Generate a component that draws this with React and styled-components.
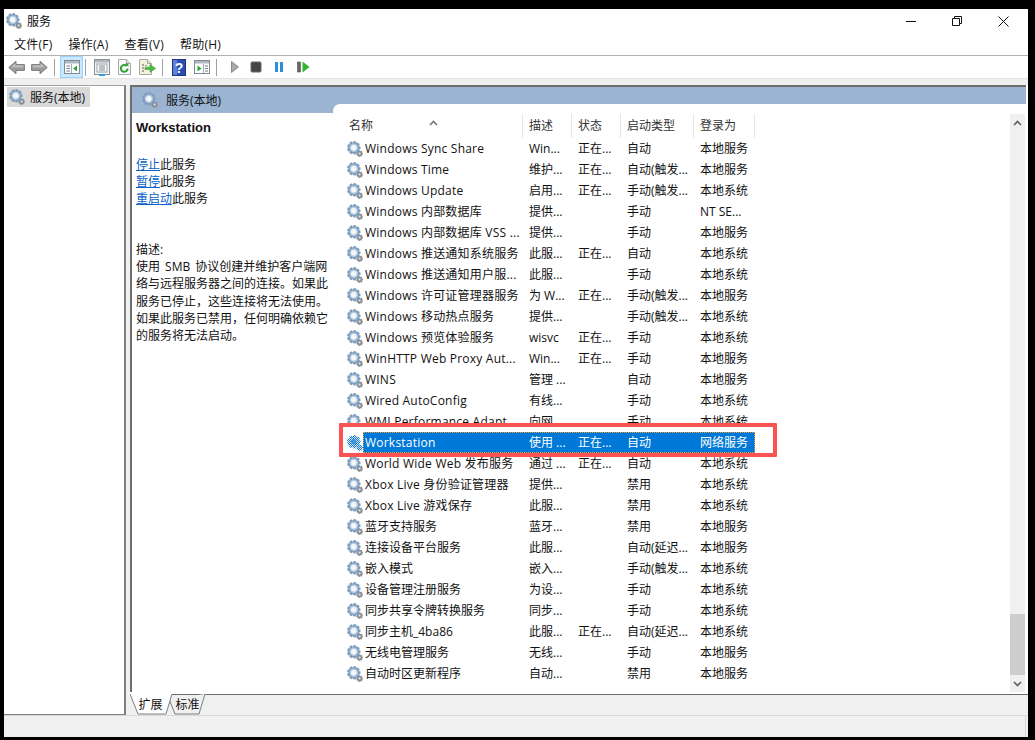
import React from "react";
import styled, { createGlobalStyle } from "styled-components";

const FONT = `"Open Sans", "Noto Sans CJK SC", sans-serif`;

const GlobalStyle = createGlobalStyle`
  html, body {
    margin: 0;
    padding: 0;
    background: #000;
  }
  body {
    font-family: ${FONT};
    font-size: 12px;
    line-height: 17px;
    color: #111;
  }
`;

const services = [
  ["Windows Sync Share", "Win...", "正在...", "自动", "本地服务"],
  ["Windows Time", "维护...", "正在...", "自动(触发...", "本地服务"],
  ["Windows Update", "启用...", "正在...", "手动(触发...", "本地系统"],
  ["Windows 内部数据库", "提供...", "", "手动", "NT SE..."],
  ["Windows 内部数据库 VSS ...", "提供...", "", "手动", "本地服务"],
  ["Windows 推送通知系统服务", "此服...", "正在...", "自动", "本地系统"],
  ["Windows 推送通知用户服...", "此服...", "", "手动", "本地系统"],
  ["Windows 许可证管理器服务", "为 W...", "正在...", "手动(触发...", "本地服务"],
  ["Windows 移动热点服务", "提供...", "", "手动(触发...", "本地系统"],
  ["Windows 预览体验服务", "wisvc", "正在...", "手动", "本地系统"],
  ["WinHTTP Web Proxy Aut...", "Win...", "正在...", "手动", "本地服务"],
  ["WINS", "管理 ...", "", "自动", "本地服务"],
  ["Wired AutoConfig", "有线...", "", "手动", "本地系统"],
  ["WMI Performance Adapt...", "向网...", "", "手动", "本地系统"],
  ["Workstation", "使用 ...", "正在...", "自动", "网络服务"],
  ["World Wide Web 发布服务", "通过 ...", "正在...", "自动", "本地系统"],
  ["Xbox Live 身份验证管理器", "提供...", "", "禁用", "本地系统"],
  ["Xbox Live 游戏保存", "此服...", "", "禁用", "本地系统"],
  ["蓝牙支持服务", "蓝牙...", "", "禁用", "本地服务"],
  ["连接设备平台服务", "此服...", "", "自动(延迟...", "本地服务"],
  ["嵌入模式", "嵌入...", "", "手动(触发...", "本地系统"],
  ["设备管理注册服务", "为设...", "", "手动", "本地系统"],
  ["同步共享令牌转换服务", "同步...", "", "手动", "本地系统"],
  ["同步主机_4ba86", "此服...", "正在...", "自动(延迟...", "本地系统"],
  ["无线电管理服务", "无线...", "", "手动", "本地服务"],
  ["自动时区更新程序", "自动...", "", "禁用", "本地服务"],
];

const columns = ["名称", "描述", "状态", "启动类型", "登录为"];

// toothed outline for the gear icon
const gearPath = (cx, cy, outer, inner, teeth) => {
  const pts = [];
  const step = (Math.PI * 2) / teeth;
  for (let i = 0; i < teeth; i++) {
    const a = i * step;
    [
      [inner, -0.5],
      [outer, -0.28],
      [outer, 0.28],
      [inner, 0.5],
    ].forEach(([r, k]) => {
      const t = a + k * step;
      pts.push(`${(cx + r * Math.cos(t)).toFixed(2)} ${(cy + r * Math.sin(t)).toFixed(2)}`);
    });
  }
  return `M${pts.join("L")}Z`;
};

const BIG_GEAR = gearPath(6.8, 6.8, 6.8, 5.2, 9);
const SMALL_GEAR = gearPath(12.6, 12.6, 3.4, 2.4, 7);

const GearIcon = ({ selected }) => (
  <svg width="16" height="16" viewBox="0 0 16 16">
    {selected && (
      <defs>
        <pattern id="sel-dither" width="2" height="2" patternUnits="userSpaceOnUse">
          <rect width="2" height="2" fill="#0f72cc" />
          <rect width="1" height="1" fill="#d8ebfb" />
          <rect x="1" y="1" width="1" height="1" fill="#d8ebfb" />
        </pattern>
      </defs>
    )}
    <path d={SMALL_GEAR} fill={selected ? "url(#sel-dither)" : "#8b9097"} />
    {!selected && <circle cx="12.6" cy="12.6" r="1" fill="#e6e8ea" />}
    <path d={BIG_GEAR} fill={selected ? "url(#sel-dither)" : "#7e9cbc"} />
    {!selected && <circle cx="6.8" cy="6.8" r="4.2" fill="#b9cde2" />}
    <circle cx="6.8" cy="6.8" r="2.7" fill={selected ? "#3f94de" : "#f4f7fa"} />
  </svg>
);

const BackIcon = () => (
  <svg width="17" height="15" viewBox="0 0 17 15">
    <path d="M.8 7.5 8 1.2v3.4h8.4v5.8H8v3.4z" fill="#9c9c9c" stroke="#7a7a7a" />
    <path d="M3 7.2 7.4 3.6v2h8v1.6z" fill="#c4c4c4" />
  </svg>
);

const ForwardIcon = () => (
  <svg width="17" height="15" viewBox="0 0 17 15">
    <path d="M16.2 7.5 9 1.2v3.4H.6v5.8H9v3.4z" fill="#9c9c9c" stroke="#7a7a7a" />
    <path d="M14 7.2 9.6 3.6v2h-8v1.6z" fill="#c4c4c4" />
  </svg>
);

const TreeIcon = () => (
  <svg width="16" height="14" viewBox="0 0 16 14">
    <rect x=".5" y=".5" width="15" height="13" fill="#fff" stroke="#7f8a94" />
    <rect x="1" y="1" width="14" height="2.5" fill="#aeb8c2" />
    <path d="M7.5 4v9" stroke="#a3acb5" />
    <path d="M2.5 6h3.5M2.5 8.5h3.5M2.5 11h3.5" stroke="#6f7a85" />
    <path d="M13 5.5v6L9.2 8.5z" fill="#2aa52f" />
  </svg>
);

const PropertiesIcon = () => (
  <svg width="16" height="17" viewBox="0 0 16 17">
    <rect x=".5" y=".5" width="15" height="15" fill="#f4f4f4" stroke="#8a9097" />
    <rect x="1" y="1" width="14" height="2.5" fill="#b0b6bc" />
    <rect x="3" y="5" width="10" height="8" fill="#fff" stroke="#9aa1a8" />
    <path d="M5 7h6M5 9h6M5 11h6" stroke="#7a828a" />
    <rect x="5" y="15" width="6" height="2" fill="#2f9be0" />
  </svg>
);

const RefreshIcon = () => (
  <svg width="15" height="16" viewBox="0 0 15 16">
    <path d="M1.5.5h8l4 4v11h-12z" fill="#fafafa" stroke="#a8a8a8" />
    <path d="M9.5.5v4h4" fill="#e2e2e2" stroke="#a8a8a8" />
    <path d="M10.6 9.6a3.4 3.4 0 1 1-1-2.6" fill="none" stroke="#2f9e35" strokeWidth="2" />
    <path d="M8 4.6h3.4V8z" fill="#2f9e35" />
  </svg>
);

const ExportIcon = () => (
  <svg width="17" height="16" viewBox="0 0 17 16">
    <path d="M.5.5h8l4 4v11H.5z" fill="#f7f1dc" stroke="#a8a8a8" />
    <path d="M8.5.5v4h4" fill="#e5dfcb" stroke="#a8a8a8" />
    <path d="M3 6h2M3 9h2M3 12h2" stroke="#555" />
    <path d="M6 6.5h2" stroke="#999" />
    <path d="M6 8.2h5V5.6L16.6 9.4 11 13.2v-2.6H6z" fill="#4cb848" stroke="#3a9a3a" strokeWidth=".6" />
  </svg>
);

const HelpIcon = () => (
  <svg width="14" height="17" viewBox="0 0 14 17">
    <rect x=".5" y=".5" width="13" height="16" fill="#2a4fb0" stroke="#1b3380" />
    <rect x="1" y="1" width="4" height="15" fill="#5f80d8" />
    <text x="7" y="13.5" textAnchor="middle" fontFamily="Liberation Sans" fontWeight="700" fontSize="14" fill="#fff">
      ?
    </text>
  </svg>
);

const ActionPaneIcon = () => (
  <svg width="16" height="14" viewBox="0 0 16 14">
    <rect x=".5" y=".5" width="15" height="13" fill="#fff" stroke="#7f8a94" />
    <rect x="1" y="1" width="14" height="2.5" fill="#aeb8c2" />
    <path d="M9.5 4v9" stroke="#a3acb5" />
    <path d="M11 6h3M11 8.5h3M11 11h3" stroke="#6f7a85" />
    <path d="M3.5 5.5v6l4-3z" fill="#2aa52f" />
  </svg>
);

const PlayIcon = () => (
  <svg width="16" height="16" viewBox="0 0 16 16">
    <path d="M6.5 2.5v11l7-5.5z" fill="#a9a9a9" stroke="#8c8c8c" />
  </svg>
);

const StopIcon = () => (
  <svg width="16" height="16" viewBox="0 0 16 16">
    <rect x="3" y="3" width="10" height="10" rx="1" fill="#444" stroke="#6a6a6a" />
  </svg>
);

const PauseIcon = () => (
  <svg width="16" height="16" viewBox="0 0 16 16">
    <rect x="4" y="3" width="3" height="10" fill="#2a8fdc" />
    <rect x="9" y="3" width="3" height="10" fill="#2a8fdc" />
  </svg>
);

const ResumeIcon = () => (
  <svg width="16" height="16" viewBox="0 0 16 16">
    <rect x="3.5" y="3" width="3" height="10" fill="#666" stroke="#555" strokeWidth=".6" />
    <path d="M8.5 2.5v11l7-5.5z" fill="#2eb82e" />
  </svg>
);

const MinimizeIcon = () => (
  <svg width="10" height="10" viewBox="0 0 10 10">
    <path d="M0 5.5h10" stroke="#111" />
  </svg>
);

const RestoreIcon = () => (
  <svg width="10" height="10" viewBox="0 0 10 10">
    <path d="M.5 2.5h7v7h-7zM2.5 2.5v-2h7v7h-2" fill="none" stroke="#111" />
  </svg>
);

const CloseIcon = () => (
  <svg width="11" height="11" viewBox="0 0 11 11">
    <path d="M.5.5l10 10M10.5.5l-10 10" stroke="#111" />
  </svg>
);

const CaretIcon = ({ down }) => (
  <svg width="9" height="6" viewBox="0 0 9 6">
    <path d={down ? "M1 1l3.5 3.5L8 1" : "M1 5l3.5-3.5L8 5"} fill="none" stroke="currentColor" strokeWidth="1.6" />
  </svg>
);

const App = () => (
  <>
    <GlobalStyle />
    <Window>
      <TitleBar>
        <TitleLabel>
          <GearIcon />
          <span>服务</span>
        </TitleLabel>
        <WindowControls>
          <WindowButton><MinimizeIcon /></WindowButton>
          <WindowButton><RestoreIcon /></WindowButton>
          <WindowButton><CloseIcon /></WindowButton>
        </WindowControls>
      </TitleBar>

      <MenuBar>
        <MenuItem>文件(F)</MenuItem>
        <MenuItem>操作(A)</MenuItem>
        <MenuItem>查看(V)</MenuItem>
        <MenuItem>帮助(H)</MenuItem>
      </MenuBar>

      <Toolbar>
        <ToolButton><BackIcon /></ToolButton>
        <ToolButton><ForwardIcon /></ToolButton>
        <ToolSeparator />
        <ActiveToolButton><TreeIcon /></ActiveToolButton>
        <ToolSeparator />
        <ToolButton><PropertiesIcon /></ToolButton>
        <ToolButton><RefreshIcon /></ToolButton>
        <ToolButton><ExportIcon /></ToolButton>
        <ToolSeparator />
        <ToolButton><HelpIcon /></ToolButton>
        <ToolButton><ActionPaneIcon /></ToolButton>
        <ToolSeparator />
        <ToolButton><PlayIcon /></ToolButton>
        <ToolButton><StopIcon /></ToolButton>
        <ToolButton><PauseIcon /></ToolButton>
        <ToolButton><ResumeIcon /></ToolButton>
      </Toolbar>
      <ToolbarGap />

      <Main>
        <TreePane>
          <TreeItem>
            <GearIcon />
            <span>服务(本地)</span>
          </TreeItem>
        </TreePane>

        <DetailPane>
          <DetailFrame>
            <DetailHeader>
              <GearIcon />
              <span>服务(本地)</span>
            </DetailHeader>
            <DetailBody>
              <InfoPanel>
                <InfoTitle>Workstation</InfoTitle>
                <InfoActions>
                  <div><ActionLink>停止</ActionLink>此服务</div>
                  <div><ActionLink>暂停</ActionLink>此服务</div>
                  <div><ActionLink>重启动</ActionLink>此服务</div>
                </InfoActions>
                <InfoText>
                  描述:
                  <br />
                  使用 SMB 协议创建并维护客户端网
                  <br />
                  络与远程服务器之间的连接。如果此
                  <br />
                  服务已停止，这些连接将无法使用。
                  <br />
                  如果此服务已禁用，任何明确依赖它
                  <br />
                  的服务将无法启动。
                </InfoText>
              </InfoPanel>

              <ListPanel>
                <ListTable>
                  <HeaderRow>
                    {columns.map((col) => (
                      <HeaderCell key={col}>{col}</HeaderCell>
                    ))}
                    <SortCaret><CaretIcon /></SortCaret>
                  </HeaderRow>
                  {services.map((row) => {
                    const selected = row[0] === "Workstation";
                    return (
                      <ServiceRow key={row[0]} $selected={selected}>
                        {selected && <Highlight />}
                        <GearIcon selected={selected} />
                        <RowCells $selected={selected}>
                          {row.map((text, i) => (
                            <Cell key={i} $latin={i === 0 && /^[A-Za-z]/.test(text)}>
                              {text}
                            </Cell>
                          ))}
                        </RowCells>
                      </ServiceRow>
                    );
                  })}
                </ListTable>
                <ScrollBar>
                  <ScrollArrow><CaretIcon /></ScrollArrow>
                  <ScrollTrack><ScrollThumb /></ScrollTrack>
                  <ScrollArrow><CaretIcon down /></ScrollArrow>
                </ScrollBar>
              </ListPanel>
            </DetailBody>
          </DetailFrame>

          <TabStrip>
            <Tab $active $width={43}>
              <svg width="43" height="21" viewBox="0 0 43 21">
                <path d="M0 0l8 20h28l6-20" fill="#fff" stroke="#7d7d7d" />
              </svg>
              <span>扩展</span>
            </Tab>
            <Tab $width={37}>
              <svg width="37" height="21" viewBox="0 0 37 21">
                <path d="M0 5l6 15h24l6-20" fill="#f0f0f0" stroke="#7d7d7d" />
              </svg>
              <span>标准</span>
            </Tab>
          </TabStrip>
        </DetailPane>
      </Main>

      <StatusBar>
        <StatusDivider />
      </StatusBar>
    </Window>
  </>
);

const Window = styled.div`
  width: 1024px;
  height: 728px;
  margin: 9px 0 0 4px;
  background: #fff;
  display: flex;
  flex-direction: column;
  overflow: hidden;
`;

const TitleBar = styled.div`
  height: 24px;
  display: flex;
  align-items: center;
  justify-content: space-between;
  padding: 0 2px 0 2px;
`;

const TitleLabel = styled.div`
  display: flex;
  align-items: center;
  gap: 5px;
`;

const WindowControls = styled.div`
  display: flex;
`;

const WindowButton = styled.div`
  width: 46px;
  height: 24px;
  display: flex;
  align-items: center;
  justify-content: center;
`;

const MenuBar = styled.div`
  height: 22px;
  display: flex;
  align-items: center;
  padding-left: 10px;
  gap: 16px;
`;

const MenuItem = styled.div`
  white-space: nowrap;
  letter-spacing: 0.25px;
`;

const Toolbar = styled.div`
  height: 22px;
  border-top: 1px solid #b2b2b2;
  display: flex;
  align-items: center;
  padding-left: 1px;
`;

const ToolButton = styled.div`
  width: 23px;
  height: 21px;
  display: flex;
  align-items: center;
  justify-content: center;
`;

const ActiveToolButton = styled(ToolButton)`
  box-sizing: border-box;
  height: 22px;
  margin: 0 -1px 0 1px;
  background: #cce8ff;
  border: 1px solid #99d1ff;
`;

const ToolSeparator = styled.div`
  width: 1px;
  height: 17px;
  margin: 0 4px 0 3px;
  background: #a0a0a0;
`;

const ToolbarGap = styled.div`
  height: 7px;
  background: #f0f0f0;
  border-top: 1px solid #e3e3e3;
  box-sizing: border-box;
`;

const Main = styled.div`
  height: 630px;
  display: flex;
  background: #f0f0f0;
`;

const TreePane = styled.div`
  width: 122px;
  box-sizing: border-box;
  background: #fff;
  border-top: 1px solid #a0a0a0;
  border-right: 2px solid #808080;
  border-bottom: 1px solid #808080;
  padding: 1px 0 0 3px;
`;

const TreeItem = styled.div`
  width: 83px;
  height: 20px;
  background: #d9d9d9;
  display: flex;
  align-items: center;
  gap: 5px;
  padding-left: 2px;
  box-sizing: border-box;
  white-space: nowrap;
`;

const DetailPane = styled.div`
  width: 898px;
  margin-left: 4px;
  display: flex;
  flex-direction: column;
  background: #fff;
`;

const DetailFrame = styled.div`
  flex: none;
  height: 605px;
  margin: 0 2px 0 0;
  border-top: 2px solid #6d6d6d;
  border-left: 2px solid #6d6d6d;
  background: #fff;
  display: flex;
  flex-direction: column;
`;

const DetailHeader = styled.div`
  height: 26px;
  flex: none;
  box-sizing: border-box;
  background: #9ab4d1;
  display: flex;
  align-items: flex-start;
  gap: 8px;
  padding: 5px 0 0 10px;
`;

const DetailBody = styled.div`
  flex: 1;
  min-height: 0;
  display: flex;
`;

const InfoPanel = styled.div`
  width: 201px;
  flex: none;
  padding: 6px 0 0 4px;
  box-sizing: border-box;
  background: #fff;
  white-space: nowrap;
`;

const InfoTitle = styled.div`
  font-family: "Liberation Sans", sans-serif;
  font-size: 13px;
  font-weight: 700;
`;

const InfoActions = styled.div`
  margin-top: 20px;
`;

const ActionLink = styled.span`
  color: #0a62c8;
  text-decoration: underline;
`;

const InfoText = styled.div`
  margin-top: 34px;
  line-height: 17.2px;
  word-spacing: 2px;
`;

const ListPanel = styled.div`
  flex: 1;
  margin-top: -9px;
  display: flex;
  justify-content: space-between;
  background: #fff;
  border-top-left-radius: 7px;
  padding: 10px 1px 0 14px;
`;

const ListTable = styled.div`
  width: 408px;
`;

const HeaderRow = styled.div`
  position: relative;
  height: 24px;
  display: grid;
  grid-template-columns: 176px 49px 49px 73px 61px;
`;

const HeaderCell = styled.div`
  display: flex;
  align-items: center;
  border-right: 1px solid #e5e5e5;
  padding: 0 0 2px 6px;
  color: #333;
  &:first-child {
    padding-left: 2px;
  }
`;

const SortCaret = styled.div`
  position: absolute;
  left: 82px;
  top: -1px;
  color: #777;
`;

const ServiceRow = styled.div`
  position: relative;
  z-index: ${(p) => (p.$selected ? 1 : "auto")};
  height: 21px;
  display: flex;
  align-items: center;
`;

const Highlight = styled.div`
  position: absolute;
  z-index: -1;
  left: -8px;
  top: -9px;
  width: 438px;
  height: 34px;
  box-sizing: border-box;
  background: #fff;
  border: 4px solid #fb5252;
  border-radius: 1px;
`;

const RowCells = styled.div`
  height: 21px;
  display: grid;
  grid-template-columns: 159px 49px 49px 73px 62px;
  align-items: center;
  background: ${(p) => (p.$selected ? "#0078d7" : "transparent")};
  color: ${(p) => (p.$selected ? "#fff" : "#111")};
  outline: ${(p) => (p.$selected ? "1px dotted #f0a030" : "none")};
  outline-offset: -1px;
`;

const Cell = styled.div`
  padding-left: 7px;
  white-space: nowrap;
  overflow: hidden;
  letter-spacing: ${(p) => (p.$latin ? "0.22px" : "0")};
  &:first-child {
    padding-left: 2px;
  }
`;

const ScrollBar = styled.div`
  width: 15px;
  flex: none;
  background: #f0f0f0;
  display: flex;
  flex-direction: column;
`;

const ScrollArrow = styled.div`
  height: 17px;
  flex: none;
  display: flex;
  align-items: center;
  justify-content: center;
  color: #606060;
`;

const ScrollTrack = styled.div`
  flex: 1;
  display: flex;
  flex-direction: column;
  justify-content: flex-end;
`;

const ScrollThumb = styled.div`
  height: 61px;
  background: #cdcdcd;
`;

const TabStrip = styled.div`
  flex: none;
  height: 21px;
  margin-top: 2px;
  box-sizing: border-box;
  background: #f0f0f0;
  border-top: 1px solid #6d6d6d;
  display: flex;
  position: relative;
`;

const Tab = styled.div`
  position: relative;
  z-index: ${(p) => (p.$active ? 1 : 0)};
  width: ${(p) => p.$width}px;
  height: 21px;
  box-sizing: border-box;
  margin: -1px -4px 0 0;
  padding: 0 ${(p) => (p.$active ? 2 : 0)}px 1px 0;
  display: flex;
  align-items: center;
  justify-content: center;

  & > svg {
    position: absolute;
    left: 0;
    top: 0;
  }
  & > span {
    position: relative;
  }
`;

const StatusBar = styled.div`
  height: 22px;
  box-sizing: border-box;
  background: #f0f0f0;
  border-top: 1px solid #d9d9d9;
  display: flex;
  justify-content: flex-end;
  padding-right: 2px;
`;

const StatusDivider = styled.div`
  width: 1px;
  background: #d9d9d9;
`;

export default App;
